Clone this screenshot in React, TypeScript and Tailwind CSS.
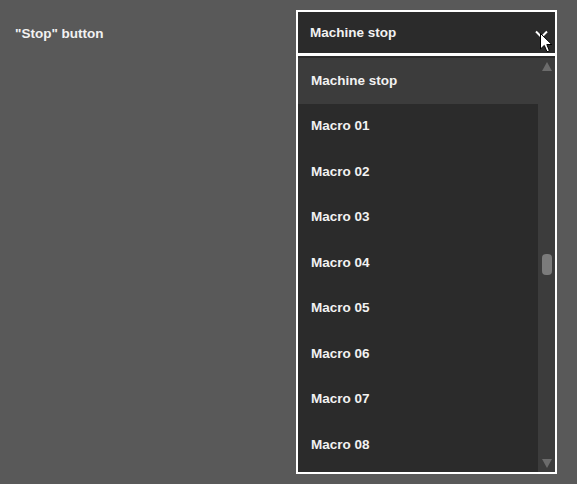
import React from 'react';

const items = [
  'Machine stop',
  'Macro 01',
  'Macro 02',
  'Macro 03',
  'Macro 04',
  'Macro 05',
  'Macro 06',
  'Macro 07',
  'Macro 08',
];

const Cursor = () => (
  <svg width="13" height="20" viewBox="0 0 13 20" className="absolute left-[242px] top-[21px]">
    <path d="M0.5 0.5 L0.5 16 L4.3 12.4 L7 18.8 L9.4 17.8 L6.8 11.5 L11.8 11.5 Z" fill="#fff" stroke="#000" strokeWidth="1" />
  </svg>
);

const App: React.FC = () => {
  const selected = 'Machine stop';

  return (
    <div className="flex h-[484px] w-[577px] bg-[#595959] font-['Liberation_Sans',Arial,sans-serif] text-[13.5px] font-bold text-[#f2f2f2]">
      <div className="w-[296px] pl-[15px] pt-[26px] leading-[16px]">"Stop" button</div>

      <div className="w-[261px] pt-[10px]">
        {/* select box */}
        <div className="relative flex h-[45px] items-center border-2 border-white bg-[#2b2b2b] pl-[12px] pt-[2px]">
          <span>{selected}</span>
          <svg width="13" height="9" viewBox="0 0 13 9" className="absolute left-[237px] top-[18px]">
            <polyline points="1,1.5 6.5,7 12,1.5" fill="none" stroke="#fff" strokeWidth="2" />
          </svg>
          <Cursor />
        </div>

        {/* dropdown list */}
        <div className="flex h-[419px] border-x-2 border-b-2 border-t border-white bg-[#2b2b2b] pt-[2px]">
          <ul className="flex-1">
            {items.map((item) => (
              <li
                key={item}
                className={
                  'flex h-[45.5px] items-center pl-[13px] ' +
                  (item === selected ? 'bg-[#3c3c3c]' : '')
                }
              >
                {item}
              </li>
            ))}
          </ul>

          {/* scrollbar */}
          <div className="flex w-[17px] flex-col items-center bg-[#3c3c3c] pt-[4px] pb-[4px]">
            <svg width="10" height="9" viewBox="0 0 10 9">
              <polygon points="5,0 10,9 0,9" fill="#6b6b6b" />
            </svg>
            <div className="mt-[183px] h-[21px] w-[10px] rounded-[4px] bg-[#7b7b7b]" />
            <div className="flex-1" />
            <svg width="10" height="9" viewBox="0 0 10 9">
              <polygon points="0,0 10,0 5,9" fill="#6b6b6b" />
            </svg>
          </div>
        </div>
      </div>
    </div>
  );
};

export default App;
